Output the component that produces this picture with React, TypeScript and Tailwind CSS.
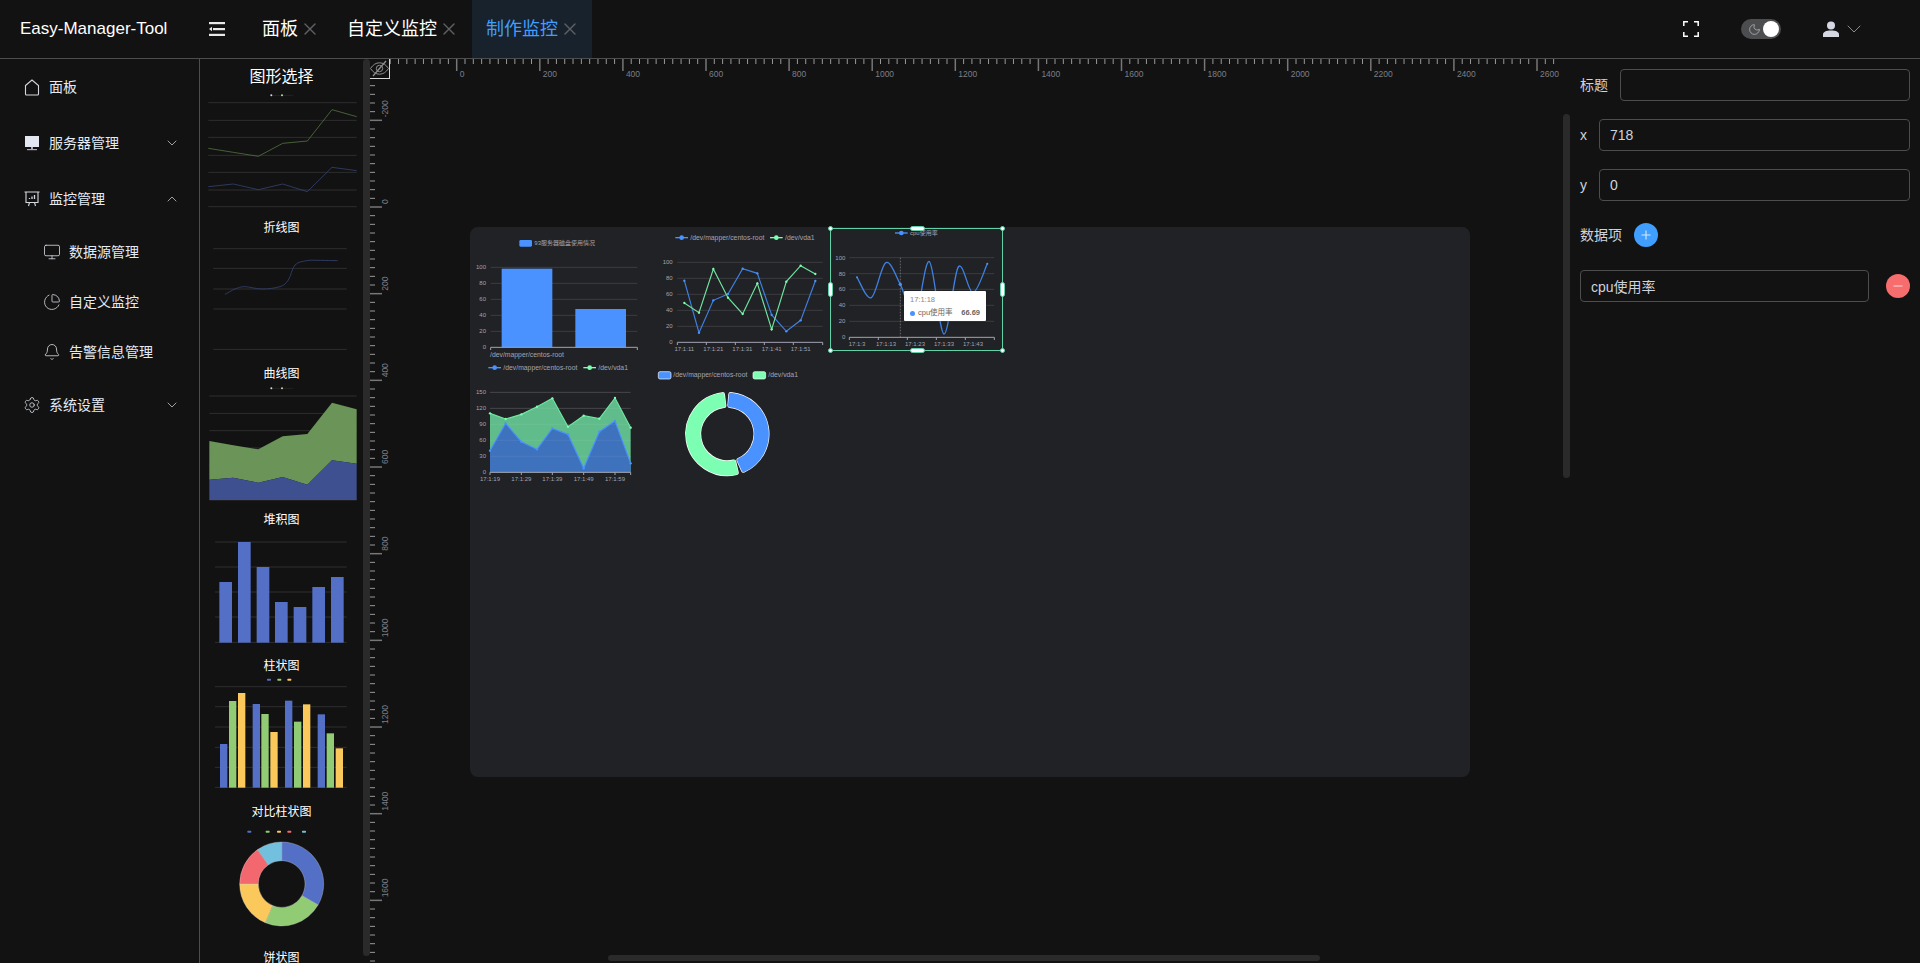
import { Bell, ChartPie, ChevronDown, ChevronUp, Minus, Monitor, Moon, Plus, Settings, X } from "lucide-react"

const FONT = '"Liberation Sans", "Noto Sans CJK SC", sans-serif'
const AXIS = "#a3a3b2"
const GRID = "#3b3c40"
const BLUE = "#4992ff"
const GREEN = "#7cffb2"

const smooth = (pts: number[][]) => {
  let d = `M${pts[0][0]} ${pts[0][1]}`
  for (let i = 0; i < pts.length - 1; i++) {
    const a = pts[Math.max(i - 1, 0)]
    const b = pts[i]
    const c = pts[i + 1]
    const e = pts[Math.min(i + 2, pts.length - 1)]
    d += ` C${b[0] + (c[0] - a[0]) / 6} ${b[1] + (c[1] - a[1]) / 6} ${c[0] - (e[0] - b[0]) / 6} ${c[1] - (e[1] - b[1]) / 6} ${c[0]} ${c[1]}`
  }
  return d
}

const toXY = (cx: number, cy: number, r: number, deg: number) => {
  const t = ((deg - 90) * Math.PI) / 180
  return `${cx + r * Math.cos(t)} ${cy + r * Math.sin(t)}`
}

const arc = (cx: number, cy: number, R: number, r: number, from: number, to: number) => {
  const big = to - from > 180 ? 1 : 0
  return `M${toXY(cx, cy, R, from)} A${R} ${R} 0 ${big} 1 ${toXY(cx, cy, R, to)} L${toXY(cx, cy, r, to)} A${r} ${r} 0 ${big} 0 ${toXY(cx, cy, r, from)} Z`
}

const line = (pts: number[][]) => pts.map((p) => p.join(",")).join(" ")

function Grid({ ys, x1, x2, color = GRID }: { ys: number[]; x1: number; x2: number; color?: string }) {
  return (
    <>
      {ys.map((y) => (
        <line key={y} x1={x1} x2={x2} y1={y} y2={y} stroke={color} strokeWidth={3} />
      ))}
    </>
  )
}

function YLabels({ ys, labels, x }: { ys: number[]; labels: string[]; x: number }) {
  return (
    <>
      {ys.map((y, i) => (
        <text key={y} x={x} y={y + 6} textAnchor="end" fontSize={18} fill={AXIS}>
          {labels[i]}
        </text>
      ))}
    </>
  )
}

function XAxis({ y, ticks, labels }: { y: number; ticks: number[]; labels: [number, string][] }) {
  return (
    <>
      <line x1={ticks[0]} x2={ticks[ticks.length - 1]} y1={y} y2={y} stroke={AXIS} strokeWidth={3} />
      {ticks.map((t) => (
        <line key={t} x1={t} x2={t} y1={y} y2={y + 8} stroke={AXIS} strokeWidth={3} />
      ))}
      {labels.map(([x, s]) => (
        <text key={s} x={x} y={y + 27} textAnchor="middle" fontSize={18} fill={AXIS}>
          {s}
        </text>
      ))}
    </>
  )
}

function LegendLine({ x, y, color, label, size = 20.5 }: { x: number; y: number; color: string; label: string; size?: number }) {
  return (
    <>
      <line x1={x} x2={x + 38} y1={y} y2={y} stroke={color} strokeWidth={4} />
      <circle cx={x + 19} cy={y} r={7} fill={color} />
      <text x={x + 45} y={y + 6} fontSize={size} fill={AXIS}>
        {label}
      </text>
    </>
  )
}

function BarChart() {
  const ys = [142, 190, 238, 286, 334]
  return (
    <svg className="absolute left-0 top-0 h-[133px] w-[180px]" viewBox="0 21 540 399">
      <rect x={148} y={60} width={38} height={20} rx={4} fill={BLUE} />
      <text x={193} y={75} fontSize={18} fill={AXIS}>93服务器磁盘使用情况</text>
      <Grid ys={ys} x1={62} x2={502} />
      <YLabels ys={[...ys, 382]} labels={["100", "80", "60", "40", "20", "0"]} x={48} />
      <rect x={95} y={146} width={152} height={236} fill={BLUE} />
      <rect x={316} y={267} width={152} height={115} fill={BLUE} />
      <line x1={62} x2={502} y1={382} y2={382} stroke={AXIS} strokeWidth={3} />
      <line x1={62} x2={62} y1={382} y2={390} stroke={AXIS} strokeWidth={3} />
      <line x1={502} x2={502} y1={382} y2={390} stroke={AXIS} strokeWidth={3} />
      <text x={60} y={410} fontSize={20.5} fill={AXIS}>/dev/mapper/centos-root</text>
    </svg>
  )
}

function LineChart() {
  const xs = [103, 147, 190, 234, 278, 322, 365, 409, 452, 496]
  const blue = [182, 338, 241, 222, 146, 160, 285, 334, 301, 183].map((y, i) => [xs[i], y])
  const green = [249, 278, 147, 233, 282, 190, 328, 185, 137, 162].map((y, i) => [xs[i], y])
  const ys = [127, 175, 223, 271, 319]
  return (
    <svg className="absolute left-[180px] top-0 h-[133px] w-[175px]" viewBox="0 21 525 399">
      <LegendLine x={76} y={53} color={BLUE} label="/dev/mapper/centos-root" />
      <LegendLine x={360} y={53} color={GREEN} label="/dev/vda1" />
      <Grid ys={ys} x1={82} x2={518} />
      <YLabels ys={[...ys, 367]} labels={["100", "80", "60", "40", "20", "0"]} x={68} />
      <XAxis
        y={367}
        ticks={[82, 169, 256, 343, 430, 518]}
        labels={[[103, "17:1:11"], [190, "17:1:21"], [277, "17:1:31"], [365, "17:1:41"], [452, "17:1:51"]]}
      />
      <polyline points={line(blue)} fill="none" stroke="#3f80e0" strokeWidth={3.5} />
      <polyline points={line(green)} fill="none" stroke="#6fe5a0" strokeWidth={3.5} />
      {blue.map((p) => <circle key={p[0]} cx={p[0]} cy={p[1]} r={3.5} fill={BLUE} />)}
      {green.map((p) => <circle key={p[0]} cx={p[0]} cy={p[1]} r={3.5} fill={GREEN} />)}
    </svg>
  )
}

function CpuChart() {
  const pts = [[621, 172], [664, 233], [708, 128], [751, 193], [795, 290], [838, 125], [882, 342], [925, 141], [969, 218], [1012, 131]]
  const ys = [113, 161, 208, 256, 304]
  return (
    <svg className="absolute left-[355px] top-0 h-[133px] w-[185px]" viewBox="525 21 555 399">
      <LegendLine x={735} y={39} color={BLUE} label="cpu使用率" size={18} />
      <Grid ys={ys} x1={598} x2={1033} />
      <YLabels ys={[...ys, 352]} labels={["100", "80", "60", "40", "20", "0"]} x={586} />
      <XAxis
        y={352}
        ticks={[598, 685, 772, 859, 946, 1033]}
        labels={[[621, "17:1:3"], [708, "17:1:13"], [795, "17:1:23"], [882, "17:1:33"], [969, "17:1:43"]]}
      />
      <line x1={751} x2={751} y1={113} y2={352} stroke="#8a8a90" strokeWidth={2} strokeDasharray="5 4" />
      <path d={smooth(pts)} fill="none" stroke="#3f80e0" strokeWidth={4} />
      <circle cx={751} cy={193} r={5} fill={BLUE} />
      <circle cx={621} cy={172} r={3} fill={BLUE} />
      <circle cx={1012} cy={131} r={3} fill={BLUE} />
    </svg>
  )
}

function AreaChart() {
  const xs = [60, 107, 154, 201, 247, 294, 341, 388, 435, 482]
  const blue = [692, 610, 665, 688, 625, 643, 745, 635, 603, 730].map((y, i) => [xs[i], y])
  const green = [580, 597, 583, 560, 535, 620, 587, 596, 534, 623].map((y, i) => [xs[i], y])
  const ys = [517, 565, 613, 661, 709]
  return (
    <svg className="absolute left-0 top-[133px] h-[130px] w-[180px]" viewBox="0 420 540 390">
      <LegendLine x={55} y={443} color={BLUE} label="/dev/mapper/centos-root" />
      <LegendLine x={340} y={443} color={GREEN} label="/dev/vda1" />
      <Grid ys={ys} x1={60} x2={482} />
      <YLabels ys={[...ys, 757]} labels={["150", "120", "90", "60", "30", "0"]} x={48} />
      <polygon points={line([...green, [482, 757], [60, 757]])} fill="#60bd8b" />
      <polygon points={line([...blue, [482, 757], [60, 757]])} fill="#3f72bd" />
      <Grid ys={ys} x1={60} x2={482} color="#ffffff10" />
      <XAxis
        y={757}
        ticks={[60, 154, 247, 341, 435, 482]}
        labels={[[60, "17:1:19"], [154, "17:1:29"], [247, "17:1:39"], [341, "17:1:49"], [435, "17:1:59"]]}
      />
      <polyline points={line(blue)} fill="none" stroke={BLUE} strokeWidth={3.5} />
      <polyline points={line(green)} fill="none" stroke="#6fe5a0" strokeWidth={3.5} />
      {blue.map((p) => <circle key={p[0]} cx={p[0]} cy={p[1]} r={3.5} fill={BLUE} />)}
      {green.map((p) => <circle key={p[0]} cx={p[0]} cy={p[1]} r={3.5} fill={GREEN} />)}
    </svg>
  )
}

function DonutChart() {
  const cx = 232
  const cy = 642
  const slices: [number, number, string][] = [[5, 156, BLUE], [167, 353, GREEN]]
  return (
    <svg className="absolute left-[180px] top-[133px] h-[130px] w-[175px]" viewBox="0 420 525 390">
      <rect x={25} y={455} width={38} height={22} rx={5} fill={BLUE} stroke="#fff" strokeWidth={2} />
      <text x={70} y={471} fontSize={20.5} fill={AXIS}>/dev/mapper/centos-root</text>
      <rect x={309} y={455} width={38} height={22} rx={5} fill={GREEN} stroke="#fff" strokeWidth={2} />
      <text x={355} y={471} fontSize={20.5} fill={AXIS}>/dev/vda1</text>
      {slices.map(([a, b, c]) => (
        <g key={c}>
          <path d={arc(cx, cy, 119, 86, a, b)} fill="#fff" stroke="#fff" strokeWidth={15} strokeLinejoin="round" />
          <path d={arc(cx, cy, 119, 86, a, b)} fill={c} stroke={c} strokeWidth={11} strokeLinejoin="round" />
        </g>
      ))}
    </svg>
  )
}

function Selection() {
  return (
    <div className="absolute left-[360px] top-[1px] h-[123px] w-[173px] border border-[#5fd3a7]">
      <span className="absolute -left-[3px] -top-[3px] h-[5px] w-[5px] rounded-full border border-[#5fd3a7] bg-white" />
      <span className="absolute -right-[3px] -top-[3px] h-[5px] w-[5px] rounded-full border border-[#5fd3a7] bg-white" />
      <span className="absolute -bottom-[3px] -left-[3px] h-[5px] w-[5px] rounded-full border border-[#5fd3a7] bg-white" />
      <span className="absolute -bottom-[3px] -right-[3px] h-[5px] w-[5px] rounded-full border border-[#5fd3a7] bg-white" />
      <span className="absolute -top-[3px] left-[79px] h-[5px] w-[15px] rounded-full border border-[#5fd3a7] bg-white" />
      <span className="absolute -bottom-[3px] left-[79px] h-[5px] w-[15px] rounded-full border border-[#5fd3a7] bg-white" />
      <span className="absolute -left-[3px] top-[53px] h-[15px] w-[5px] rounded-full border border-[#5fd3a7] bg-white" />
      <span className="absolute -right-[3px] top-[53px] h-[15px] w-[5px] rounded-full border border-[#5fd3a7] bg-white" />
    </div>
  )
}

function ChartTooltip() {
  return (
    <div className="absolute left-[434px] top-[64px] h-[30px] w-[82px] rounded-[1px] bg-white px-[6px] pt-[4px] text-[7.5px] leading-[10px] text-[#666] shadow">
      <div className="text-[#888]">17:1:18</div>
      <div className="mt-[3px] flex items-center justify-between">
        <span className="flex items-center gap-[3px]">
          <span className="h-[5px] w-[5px] rounded-full bg-[#4992ff]" />
          cpu使用率
        </span>
        <span className="font-bold">66.69</span>
      </div>
    </div>
  )
}

function Thumb({ box, children }: { box: string; children: React.ReactNode }) {
  return (
    <svg className="block h-[130px] w-[163px] shrink-0" viewBox={box}>
      {children}
    </svg>
  )
}

function ThumbTitle({ text }: { text: string }) {
  return <div className="h-[16px] w-[163px] shrink-0 text-center text-[12px] leading-[16px] text-white">{text}</div>
}

function ThumbLegend({ y, items }: { y: number; items: [number, string][] }) {
  return (
    <>
      {items.map(([x, c]) => (
        <rect key={x} x={x} y={y - 3} width={12} height={6} rx={2} fill={c} />
      ))}
    </>
  )
}

function ThumbDots({ y }: { y: number }) {
  return (
    <>
      <line x1={214} x2={280} y1={y} y2={y} stroke="#2a2a2c" strokeWidth={2} />
      <circle cx={214} cy={y} r={3} fill="#cfd6f0" />
      <circle cx={246} cy={y} r={3} fill="#b8dca8" />
    </>
  )
}

const DIM_GRID = "#2e2e30"
const BAR_BLUE = "#5470c6"
const BAR_GREEN = "#91cc75"
const BAR_YELLOW = "#fbc85b"

function ChartPicker() {
  const stackGreen = [[28, 180], [100, 193], [175, 205], [248, 166], [322, 159], [396, 65], [470, 85]]
  const stackBlue = [[28, 296], [100, 290], [175, 305], [248, 288], [322, 311], [396, 238], [470, 248]]
  const grouped: [number, number, string][] = [
    [60, 252, BAR_BLUE], [87, 123, BAR_GREEN], [114, 99, BAR_YELLOW],
    [158, 132, BAR_BLUE], [184, 162, BAR_GREEN], [211, 216, BAR_YELLOW],
    [255, 122, BAR_BLUE], [282, 185, BAR_GREEN], [309, 133, BAR_YELLOW],
    [353, 163, BAR_BLUE], [380, 220, BAR_GREEN], [407, 265, BAR_YELLOW],
  ]
  const pie: [number, number, string][] = [
    [0, 120, BAR_BLUE], [120, 203, BAR_GREEN], [203, 270, BAR_YELLOW], [270, 325, "#f2686e"], [325, 360, "#73c0de"],
  ]
  return (
    <div className="relative h-full w-[170px] shrink-0 overflow-hidden">
      <div className="flex flex-col">
        <div className="h-[31px] w-[163px] shrink-0 pt-[7px] text-center text-[16px] leading-[22px] text-white">图形选择</div>
        <Thumb box="0 90 489 390">
          <ThumbDots y={106} />
          <Grid ys={[128, 181, 232, 286, 337, 390, 440]} x1={25} x2={470} color={DIM_GRID} />
          <polyline points="25,265 100,277 175,289 248,250 322,243 396,149 470,170" fill="none" stroke="#4f7040" strokeWidth={2.5} />
          <polyline points="25,380 100,372 175,389 248,372 322,395 396,322 470,332" fill="none" stroke="#33416f" strokeWidth={2.5} />
        </Thumb>
        <ThumbTitle text="折线图" />
        <Thumb box="0 528 489 390">
          <Grid ys={[566, 625, 687, 747, 868]} x1={40} x2={440} color={DIM_GRID} />
          <path d={smooth([[75, 703], [105, 687], [135, 680], [185, 687], [240, 680], [265, 660], [285, 615], [320, 602], [355, 601], [413, 602]])} fill="none" stroke="#33416f" strokeWidth={2.5} />
        </Thumb>
        <ThumbTitle text="曲线图" />
        <Thumb box="0 3 489 390">
          <ThumbDots y={22} />
          <Grid ys={[45, 97, 149, 201, 253, 305, 357]} x1={28} x2={470} color={DIM_GRID} />
          <polygon points={line([...stackGreen, ...[...stackBlue].reverse()])} fill="#6b9558" />
          <polygon points={line([...stackBlue, [470, 357], [28, 357]])} fill="#3f5090" />
        </Thumb>
        <ThumbTitle text="堆积图" />
        <Thumb box="0 441 489 390">
          <Grid ys={[483, 558, 633, 708, 784]} x1={45} x2={440} color={DIM_GRID} />
          {[[58, 603], [114, 483], [170, 558], [225, 663], [281, 678], [337, 618], [393, 588]].map(([x, top]) => (
            <rect key={x} x={x} y={top} width={38} height={785 - top} fill={BAR_BLUE} />
          ))}
        </Thumb>
        <ThumbTitle text="柱状图" />
        <Thumb box="0 42 489 390">
          <ThumbLegend y={59} items={[[201, BAR_BLUE], [232, BAR_GREEN], [262, BAR_YELLOW]]} />
          <Grid ys={[80, 140, 201, 262, 322, 382]} x1={45} x2={440} color={DIM_GRID} />
          {grouped.map(([x, top, c]) => (
            <rect key={x} x={x} y={top} width={22} height={383 - top} fill={c} />
          ))}
        </Thumb>
        <ThumbTitle text="对比柱状图" />
        <Thumb box="0 480 489 390">
          <ThumbLegend y={515} items={[[142, BAR_BLUE], [197, BAR_GREEN], [231, BAR_YELLOW], [262, "#f2686e"], [306, "#73c0de"]]} />
          {pie.map(([a, b, c]) => (
            <path key={c} d={arc(245, 672, 126, 70, a, b)} fill={c} stroke="#d8d8d8" strokeWidth={1} />
          ))}
        </Thumb>
        <ThumbTitle text="饼状图" />
      </div>
      <div className="absolute bottom-[7px] right-0 top-0 w-[7px] rounded-full bg-[#2a2a2b]" />
    </div>
  )
}

function HorizontalRuler() {
  const ticks = Array.from({ length: 141 }, (_, i) => i - 8)
  return (
    <svg className="h-[20px] flex-1" viewBox="0 0 1170 20" preserveAspectRatio="xMinYMin slice">
      {ticks.map((i) => {
        const x = 66.7 + i * 8.31
        const big = i % 10 === 0
        return (
          <g key={i}>
            <line x1={x} x2={x} y1={0} y2={big ? 12 : 5} stroke={big ? "#777" : "#999"} strokeWidth={big ? 1.5 : 1} />
            {big && <text x={x + 3} y={18} fontSize={8.5} fill="#7a7f88">{i * 20}</text>}
          </g>
        )
      })}
    </svg>
  )
}

function VerticalRuler() {
  const ticks = Array.from({ length: 102 }, (_, i) => i - 14)
  return (
    <svg className="h-full w-[20px] shrink-0" viewBox="0 0 20 884" preserveAspectRatio="xMinYMin slice">
      {ticks.map((i) => {
        const y = 128 + i * 8.667
        const big = i % 10 === 0
        return (
          <g key={i}>
            <line x1={0} x2={big ? 12 : 5} y1={y} y2={y} stroke={big ? "#777" : "#999"} strokeWidth={big ? 1.5 : 1} />
            {big && (
              <text transform={`translate(17.5 ${y - 3}) rotate(-90)`} fontSize={8.5} fill="#7a7f88">
                {i * 20}
              </text>
            )}
          </g>
        )
      })}
    </svg>
  )
}

function Designer() {
  return (
    <div className="relative flex h-full min-w-0 flex-1 flex-col overflow-hidden">
      <div className="flex h-[20px] shrink-0">
        <div className="flex h-[20px] w-[20px] shrink-0 items-center justify-center border-b border-r border-[#d8d8d8]">
          <svg width="19" height="17" viewBox="0 0 19 17" fill="none" stroke="#8f8f8f" strokeWidth="1">
            <path d="M0.500 8.500c2.500-3.800 5.400-5.700 9-5.700s6.500 1.900 9 5.700c-2.500 3.800-5.400 5.700-9 5.700s-6.500-1.900-9-5.700Z" />
            <circle cx="9.500" cy="8.500" r="3.200" />
            <path d="M3 16 16 1" strokeWidth="1.300" />
          </svg>
        </div>
        <HorizontalRuler />
      </div>
      <div className="flex min-h-0 flex-1">
        <VerticalRuler />
        <div className="relative flex-1">
          <div className="absolute left-[80px] top-[148px] h-[550px] w-[1000px] rounded-[8px] bg-[#212225]">
            <BarChart />
            <LineChart />
            <CpuChart />
            <AreaChart />
            <DonutChart />
            <Selection />
            <ChartTooltip />
          </div>
        </div>
      </div>
      <div className="absolute bottom-[2px] left-[238px] h-[6px] w-[712px] rounded-full bg-[#2a2a2b]" />
    </div>
  )
}

function Field({ value, className }: { value: string; className: string }) {
  return (
    <input
      readOnly
      value={value}
      className={`h-[32px] rounded-[4px] border border-[#4c4d4f] bg-transparent pl-[10px] text-[14px] text-[#cfd3dc] outline-none ${className}`}
    />
  )
}

function PropertyPanel() {
  return (
    <div className="relative flex h-full w-[360px] shrink-0 flex-col pl-[20px] pr-[10px] pt-[10px] text-[14px] text-[#cfd3dc]">
      <div className="absolute left-[3px] top-[55px] h-[364px] w-[7px] rounded-full bg-[#2a2a2b]" />
      <div className="flex h-[32px] items-center gap-[12px]">
        <span>标题</span>
        <Field value="" className="min-w-0 flex-1" />
      </div>
      <div className="mt-[18px] flex h-[32px] items-center gap-[12px]">
        <span className="w-[7px]">x</span>
        <Field value="718" className="min-w-0 flex-1" />
      </div>
      <div className="mt-[18px] flex h-[32px] items-center gap-[12px]">
        <span className="w-[7px]">y</span>
        <Field value="0" className="min-w-0 flex-1" />
      </div>
      <div className="mt-[22px] flex h-[24px] items-center gap-[12px]">
        <span>数据项</span>
        <span className="flex h-[24px] w-[24px] items-center justify-center rounded-full bg-[#409eff]">
          <Plus size={14} color="#cfe6ff" />
        </span>
      </div>
      <div className="mt-[23px] flex items-center justify-between">
        <Field value="cpu使用率" className="w-[289px]" />
        <span className="flex h-[24px] w-[24px] items-center justify-center rounded-full bg-[#f76c6c]">
          <Minus size={14} color="#ffd9d9" />
        </span>
      </div>
    </div>
  )
}

function MenuItem({ icon, label, sub, arrow }: { icon: React.ReactNode; label: string; sub?: boolean; arrow?: "up" | "down" }) {
  return (
    <div className={`flex items-center text-[14px] text-[#e5eaf3] ${sub ? "h-[50px] pl-[43px]" : "h-[56px] pl-[24px]"}`}>
      <span className="flex w-[25px] shrink-0 items-center">{icon}</span>
      <span className={sub ? "ml-[1px]" : ""}>{label}</span>
      {arrow === "down" && <ChevronDown size={16} strokeWidth={1} className="ml-auto mr-[19px]" />}
      {arrow === "up" && <ChevronUp size={16} strokeWidth={1} className="ml-auto mr-[19px]" />}
    </div>
  )
}

function Sidebar() {
  const home = (
    <svg width="16" height="17" viewBox="0 0 16 17" fill="none" stroke="#d5d8de" strokeWidth="1.100">
      <path d="M1.500 6.500 8 1l6.500 5.500V15a1 1 0 0 1-1 1h-11a1 1 0 0 1-1-1V6.500Z" />
    </svg>
  )
  const server = (
    <svg width="16" height="16" viewBox="0 0 16 16" fill="#e3e7f2">
      <rect x="1" y="1" width="14" height="11" />
      <rect x="7" y="12" width="2" height="2" fill="#a8abb2" />
      <rect x="3" y="14" width="10" height="1.200" fill="#a8abb2" />
    </svg>
  )
  const board = (
    <svg width="16" height="16" viewBox="0 0 16 16" fill="none" stroke="#d5d8de" strokeWidth="1.100">
      <path d="M0.500 1h15M2 1v10.500h12V1M5.500 11.500 4.500 15M10.500 11.500l1 3.500" />
      <path d="M5.500 8V7M8 8V5.500M10.500 8V4" strokeWidth="1.300" />
    </svg>
  )
  return (
    <aside className="h-full w-[200px] shrink-0 border-r border-[#4c4d4f]">
      <MenuItem icon={home} label="面板" />
      <MenuItem icon={server} label="服务器管理" arrow="down" />
      <MenuItem icon={board} label="监控管理" arrow="up" />
      <MenuItem sub icon={<Monitor size={18} strokeWidth={1.100} color="#d5d8de" />} label="数据源管理" />
      <MenuItem sub icon={<ChartPie size={18} strokeWidth={1.100} color="#d5d8de" />} label="自定义监控" />
      <MenuItem sub icon={<Bell size={18} strokeWidth={1.100} color="#d5d8de" />} label="告警信息管理" />
      <MenuItem icon={<Settings size={18} strokeWidth={1.100} color="#d5d8de" className="-ml-[1px]" />} label="系统设置" arrow="down" />
    </aside>
  )
}

function Tab({ label, active }: { label: string; active?: boolean }) {
  return (
    <div className={`flex h-full items-center gap-[2px] pl-[14px] pr-[9px] text-[18px] ${active ? "w-[120px] bg-[#18222c] text-[#409eff]" : "text-white"}`}>
      <span>{label}</span>
      <X size={20} strokeWidth={1.600} color="#5f6063" />
    </div>
  )
}

function Header() {
  return (
    <header className="flex h-[59px] shrink-0 items-center border-b border-[#4c4d4f]">
      <div className="w-[209px] shrink-0 pl-[20px] text-[17px] text-white">Easy-Manager-Tool</div>
      <svg width="16" height="14" viewBox="0 0 16 14" fill="#e8e8e8">
        <rect width="16" height="2.200" />
        <rect x="4" y="6" width="12" height="2.200" />
        <rect y="11.800" width="16" height="2.200" />
        <path d="M0 7 3 4.800v4.400Z" />
      </svg>
      <div className="ml-[23px] flex h-full gap-[4px]">
        <Tab label="面板" />
        <Tab label="自定义监控" />
        <Tab label="制作监控" active />
      </div>
      <svg className="ml-[1091px]" width="16" height="16" viewBox="0 0 16 16" fill="none" stroke="#fff" strokeWidth="1.500">
        <path d="M0.800 5V0.800H5M11 0.800h4.200V5M15.200 11v4.200H11M5 15.200H0.800V11" />
      </svg>
      <div className="ml-[42px] flex h-[20px] w-[40px] items-center justify-between rounded-full bg-[#4c4d4f] pl-[7px] pr-[2px]">
        <Moon size={13} strokeWidth={1.100} color="#cfd3dc" />
        <span className="h-[16px] w-[16px] rounded-full bg-white" />
      </div>
      <svg className="ml-[42px]" width="16" height="16" viewBox="0 0 16 16" fill="#d5d8e2">
        <circle cx="8" cy="4.500" r="4" />
        <path d="M0 16v-2.500C0 11 3 9.500 8 9.500s8 1.500 8 4V16Z" />
      </svg>
      <ChevronDown className="ml-[3px]" size={24} strokeWidth={0.800} color="#a8abb2" />
    </header>
  )
}

export default function App() {
  return (
    <div className="flex h-screen w-screen flex-col overflow-hidden bg-[#121212]" style={{ fontFamily: FONT }}>
      <Header />
      <div className="flex min-h-0 flex-1">
        <Sidebar />
        <ChartPicker />
        <Designer />
        <PropertyPanel />
      </div>
    </div>
  )
}
